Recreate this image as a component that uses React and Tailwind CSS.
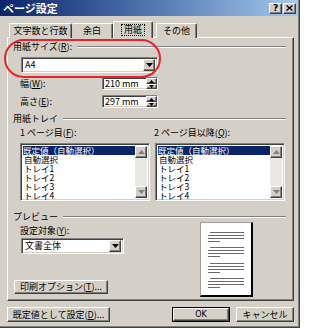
import React from "react";

const raised =
  "bg-[#d4d0c8] border border-t-white border-l-white border-r-[#404040] border-b-[#404040] shadow-[inset_-1px_-1px_0_#808080]";
const sunken =
  "bg-white border border-t-[#808080] border-l-[#808080] border-r-white border-b-white shadow-[inset_1px_1px_0_#404040,inset_-1px_-1px_0_#d4d0c8]";

function Down({ fill = "#000" }) {
  return (
    <svg width="7" height="4" viewBox="0 0 7 4">
      <path d="M0 0h7L3.5 4z" fill={fill} />
    </svg>
  );
}
function Up({ fill = "#000" }) {
  return (
    <svg width="7" height="4" viewBox="0 0 7 4">
      <path d="M0 4h7L3.5 0z" fill={fill} />
    </svg>
  );
}
function TinyUp() {
  return (
    <svg width="5" height="3" viewBox="0 0 5 3">
      <path d="M0 3h5L2.5 0z" fill="#000" />
    </svg>
  );
}
function TinyDown() {
  return (
    <svg width="5" height="3" viewBox="0 0 5 3">
      <path d="M0 0h5L2.5 3z" fill="#000" />
    </svg>
  );
}

function Header({ children }) {
  return (
    <div className="flex items-center h-[10px]">
      <span className="whitespace-nowrap">{children}</span>
      <div className="flex-1 ml-[5px] border-t border-t-[#808080] border-b border-b-white" />
    </div>
  );
}

function Combo({ w, text }) {
  return (
    <div className={`${sunken} ${w} h-[16px] flex items-center`}>
      <span className="flex-1 pl-[3px] text-[9px] leading-[10px]">{text}</span>
      <div className={`${raised} w-[12px] h-[12px] mr-[2px] flex items-center justify-center`}>
        <Down />
      </div>
    </div>
  );
}

function Spin({ text }) {
  return (
    <div className={`${sunken} w-[56px] h-[13px] flex`}>
      <span className="flex-1 pl-[2px] text-[9px] leading-[11px]">{text}</span>
      <div className="w-[11px] flex flex-col">
        <div className={`${raised} h-[6px] flex items-center justify-center`}>
          <TinyUp />
        </div>
        <div className={`${raised} h-[5px] flex items-center justify-center`}>
          <TinyDown />
        </div>
      </div>
    </div>
  );
}

function ListBox() {
  const items = ["自動選択", "トレイ1", "トレイ2", "トレイ3", "トレイ4"];
  return (
    <div className={`${sunken} w-[130px] h-[58px] flex p-[2px]`}>
      <div className="flex-1 flex flex-col text-[8.5px] leading-[9px]">
        <div className="h-[9px] bg-[#0a246a] text-white whitespace-nowrap">既定値（自動選択）</div>
        {items.map((t) => (
          <div key={t} className="h-[9px] pl-[1px] whitespace-nowrap">{t}</div>
        ))}
      </div>
      <div className="w-[12px] flex flex-col bg-[#eae8e4]">
        <div className={`${raised} h-[12px] flex items-center justify-center`}>
          <Up fill="#808080" />
        </div>
        <div className="flex-1" />
        <div className={`${raised} h-[12px] flex items-center justify-center`}>
          <Down fill="#808080" />
        </div>
      </div>
    </div>
  );
}

function Page() {
  const groups = [9, 24, 40, 55];
  return (
    <div className="w-[53px] h-[75px] bg-white border-t border-l border-t-[#a0a0a0] border-l-[#a0a0a0] border-r-2 border-b-2 border-r-black border-b-black">
      <svg width="50" height="72" viewBox="0 0 50 72">
        {groups.map((y) => (
          <g key={y} stroke="#6a6a6a" strokeWidth="1">
            <line x1="9" y1={y + 0.5} x2="43" y2={y + 0.5} />
            <line x1="7" y1={y + 3.5} x2="43" y2={y + 3.5} />
            <line x1="7" y1={y + 6.5} x2="43" y2={y + 6.5} />
            <line x1="7" y1={y + 9.5} x2="19" y2={y + 9.5} />
          </g>
        ))}
      </svg>
    </div>
  );
}

export default function App() {
  return (
    <div className="relative w-[300px] h-[328px] overflow-hidden bg-[#d4d0c8] border-r border-b border-r-[#404040] border-b-[#404040] shadow-[inset_-1px_-1px_0_#808080] text-black text-[9px] leading-[10px] font-['Noto_Sans_CJK_JP',sans-serif]">
      {/* title bar */}
      <div className="w-[298px] h-[16px] bg-linear-to-r from-[#0a246a] to-[#a6caf0] flex items-center justify-between pl-[3px] pr-[2px]">
        <span className="text-white font-bold text-[11px] leading-[12px]">ページ設定</span>
        <div className="flex gap-[1px]">
          <div className={`${raised} w-[13px] h-[11px] flex items-center justify-center font-bold text-[9px] leading-[9px] font-['DejaVu_Sans',sans-serif]`}>
            ?
          </div>
          <div className={`${raised} w-[13px] h-[11px] flex items-center justify-center`}>
            <svg width="7" height="6" viewBox="0 0 7 6">
              <path d="M0.5 0.5L6.5 5.5M6.5 0.5L0.5 5.5" stroke="#000" strokeWidth="1.4" />
            </svg>
          </div>
        </div>
      </div>

      {/* tabs */}
      <div className="mt-[5px] h-[17px] pl-[9px] flex items-end">
        <div className="w-[63px] h-[15px] bg-[#d4d0c8] border-t border-l border-r border-t-white border-l-white border-r-[#404040] rounded-t-[2px] shadow-[inset_-1px_0_0_#808080] flex justify-center pt-[2px]">
          文字数と行数
        </div>
        <div className="w-[41px] h-[15px] bg-[#d4d0c8] border-t border-r border-t-white border-r-[#404040] rounded-t-[2px] shadow-[inset_-1px_0_0_#808080] flex justify-center pt-[2px]">
          余白
        </div>
        <div className="relative z-10 w-[40px] h-[17px] bg-[#d4d0c8] border-t border-l border-r border-t-white border-l-white border-r-[#404040] rounded-t-[2px] shadow-[inset_-1px_0_0_#808080] flex justify-center pt-[2px]">
          <span className="border border-dotted border-black px-[2px] h-[12px] leading-[10px]">用紙</span>
        </div>
        <div className="ml-[3px] w-[41px] h-[15px] bg-[#d4d0c8] border-t border-l border-r border-t-white border-l-white border-r-[#404040] rounded-t-[2px] shadow-[inset_-1px_0_0_#808080] flex justify-center pt-[2px]">
          その他
        </div>
      </div>

      {/* panel */}
      <div className="-mt-[1px] ml-[7px] w-[287px] h-[264px] border border-t-white border-l-white border-r-[#404040] border-b-[#404040] shadow-[inset_-1px_-1px_0_#808080] pl-[5px] pr-[7px] flex flex-col">
        <div className="mt-[4px]">
          <Header>
            用紙サイズ(<u>R</u>):
          </Header>
        </div>
        <div className="ml-[8px] mt-[5px]">
          <Combo w="w-[137px]" text="A4" />
        </div>
        <div className="ml-[7px] mt-[4px] flex items-center">
          <span className="w-[82px]">
            幅(<u>W</u>):
          </span>
          <Spin text="210 mm" />
        </div>
        <div className="ml-[7px] mt-[5px] flex items-center">
          <span className="w-[82px]">
            高さ(<u>E</u>):
          </span>
          <Spin text="297 mm" />
        </div>

        <div className="mt-[6px]">
          <Header>用紙トレイ</Header>
        </div>
        <div className="ml-[7px] mt-[4px] flex h-[10px]">
          <span className="w-[134px]">
            1 ページ目(<u>F</u>):
          </span>
          <span>
            2 ページ目以降(<u>Q</u>):
          </span>
        </div>
        <div className="ml-[7px] mt-[5px] flex gap-[5px]">
          <ListBox />
          <ListBox />
        </div>

        <div className="mt-[11px]">
          <Header>プレビュー</Header>
        </div>
        <div className="flex">
          <div className="w-[187px] flex flex-col">
            <div className="ml-[7px] mt-[4px] h-[10px]">
              設定対象(<u>Y</u>):
            </div>
            <div className="ml-[8px] mt-[2px]">
              <Combo w="w-[103px]" text="文書全体" />
            </div>
            <div className={`${raised} ml-[1px] mt-[26px] w-[94px] h-[14px] flex items-center justify-center`}>
              印刷オプション(<u>T</u>)...
            </div>
          </div>
          <Page />
        </div>
      </div>

      {/* bottom buttons */}
      <div className="ml-[7px] mt-[6px] w-[287px] flex">
        <div className={`${raised} w-[103px] h-[15px] flex items-center justify-center`}>
          既定値として設定(<u>D</u>)...
        </div>
        <div className="ml-auto w-[58px] h-[15px] border border-black">
          <div className={`${raised} w-full h-full flex items-center justify-center font-['DejaVu_Sans',sans-serif] text-[8px]`}>
            OK
          </div>
        </div>
        <div className={`${raised} ml-[6px] w-[58px] h-[15px] flex items-center justify-center`}>
          キャンセル
        </div>
      </div>

      {/* red highlight */}
      <div className="absolute left-[4px] top-[39px] w-[157px] h-[39px] rounded-[20px] border-2 border-[#e8242a] pointer-events-none" />
    </div>
  );
}
